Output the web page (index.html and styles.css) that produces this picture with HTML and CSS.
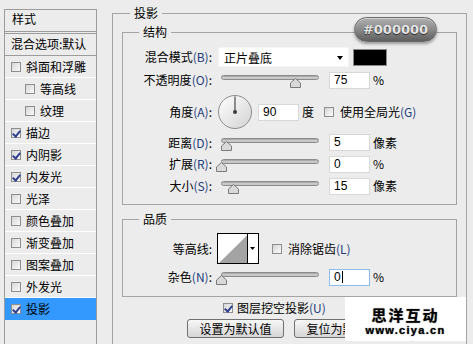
FILE: index.html
```html
<!DOCTYPE html>
<html lang="zh-CN">
<head>
    <meta charset="UTF-8">
    <meta name="viewport" content="width=device-width, initial-scale=1.0">
    <title>图层样式 - 投影</title>
    <link rel="stylesheet" href="styles.css">
</head>
<body>
    <div class="page">
        <ul class="style-list">
            <li class="list-head">样式</li>
            <li class="list-blend">混合选项:默认</li>
            <li><span class="check"></span>斜面和浮雕</li>
            <li class="sub"><span class="check"></span>等高线</li>
            <li class="sub"><span class="check"></span>纹理</li>
            <li><span class="check on"></span>描边</li>
            <li><span class="check on"></span>内阴影</li>
            <li><span class="check on"></span>内发光</li>
            <li><span class="check"></span>光泽</li>
            <li><span class="check"></span>颜色叠加</li>
            <li><span class="check"></span>渐变叠加</li>
            <li><span class="check"></span>图案叠加</li>
            <li><span class="check"></span>外发光</li>
            <li class="selected"><span class="check on"></span>投影</li>
        </ul>

        <fieldset class="group outer">
            <legend>投影</legend>

            <fieldset class="group inner structure">
                <legend>结构</legend>

                <div class="row h22">
                    <label class="lbl">混合模式<span class="key">(B)</span>:</label>
                    <div class="select">正片叠底<span class="arrow"></span></div>
                    <span class="swatch"></span>
                </div>

                <div class="row h24">
                    <label class="lbl">不透明度<span class="key">(O)</span>:</label>
                    <div class="slider"><span class="track"></span><svg class="thumb" style="left: 69px" width="11" height="10" viewBox="0 0 11 10"><polygon points="0.5,9.5 0.5,5 5.5,0.5 10.5,5 10.5,9.5" fill="#d9d9d9" stroke="#7a7a7a"/></svg></div>
                    <span class="num">75</span>
                    <span class="unit">%</span>
                </div>

                <div class="row h40">
                    <label class="lbl">角度<span class="key">(A)</span>:</label>
                    <svg class="dial" width="34" height="34" viewBox="0 0 34 34">
                        <defs>
                            <linearGradient id="dialFill" x1="0" y1="0" x2="1" y2="1">
                                <stop offset="0" stop-color="#ffffff"/>
                                <stop offset="1" stop-color="#d2d2d2"/>
                            </linearGradient>
                        </defs>
                        <circle cx="17" cy="17" r="16.5" fill="url(#dialFill)" stroke="#8c8c8c"/>
                        <line x1="17" y1="17" x2="17" y2="1.5" stroke="#4a4a4a" stroke-width="1.2"/>
                        <circle cx="17" cy="17" r="2" fill="#3c3c3c"/>
                    </svg>
                    <span class="num angle">90</span>
                    <span class="unit">度</span>
                    <span class="check gap-left"></span>
                    <span class="check-text">使用全局光<span class="key">(G)</span></span>
                </div>

                <div class="row h21">
                    <label class="lbl">距离<span class="key">(D)</span>:</label>
                    <div class="slider"><span class="track"></span><svg class="thumb" style="left: 0px" width="11" height="10" viewBox="0 0 11 10"><polygon points="0.5,9.5 0.5,5 5.5,0.5 10.5,5 10.5,9.5" fill="#d9d9d9" stroke="#7a7a7a"/></svg></div>
                    <span class="num">5</span>
                    <span class="unit">像素</span>
                </div>

                <div class="row h22">
                    <label class="lbl">扩展<span class="key">(R)</span>:</label>
                    <div class="slider"><span class="track"></span><svg class="thumb" style="left: -5px" width="11" height="10" viewBox="0 0 11 10"><polygon points="0.5,9.5 0.5,5 5.5,0.5 10.5,5 10.5,9.5" fill="#d9d9d9" stroke="#7a7a7a"/></svg></div>
                    <span class="num">0</span>
                    <span class="unit">%</span>
                </div>

                <div class="row h22">
                    <label class="lbl">大小<span class="key">(S)</span>:</label>
                    <div class="slider"><span class="track"></span><svg class="thumb" style="left: 7px" width="11" height="10" viewBox="0 0 11 10"><polygon points="0.5,9.5 0.5,5 5.5,0.5 10.5,5 10.5,9.5" fill="#d9d9d9" stroke="#7a7a7a"/></svg></div>
                    <span class="num">15</span>
                    <span class="unit">像素</span>
                </div>
            </fieldset>

            <fieldset class="group inner quality">
                <legend>品质</legend>

                <div class="row h33">
                    <label class="lbl">等高线:</label>
                    <svg class="contour" width="42" height="31" viewBox="0 0 42 31">
                        <rect x="0.5" y="0.5" width="41" height="30" fill="#fff" stroke="#000"/>
                        <polygon points="2,30 30.5,2 30.5,30" fill="#a3a3a3"/>
                        <line x1="30.5" y1="0" x2="30.5" y2="31" stroke="#000"/>
                        <polygon points="33,14 38,14 35.5,17" fill="#000"/>
                    </svg>
                    <span class="check gap-wide"></span>
                    <span class="check-text">消除锯齿<span class="key">(L)</span></span>
                </div>

                <div class="row h24">
                    <label class="lbl">杂色<span class="key">(N)</span>:</label>
                    <div class="slider"><span class="track"></span><svg class="thumb" style="left: -5px" width="11" height="10" viewBox="0 0 11 10"><polygon points="0.5,9.5 0.5,5 5.5,0.5 10.5,5 10.5,9.5" fill="#d9d9d9" stroke="#7a7a7a"/></svg></div>
                    <span class="num focus">0<span class="caret"></span></span>
                    <span class="unit">%</span>
                </div>
            </fieldset>

            <div class="knockout">
                <span class="check on"></span>
                <span class="check-text">图层挖空投影<span class="key">(U)</span></span>
            </div>

            <div class="buttons">
                <button type="button">设置为默认值</button>
                <button type="button">复位为默认值</button>
            </div>
        </fieldset>
    </div>

    <div class="badge">#000000</div>

    <div class="watermark">
        <div class="wm-title">思洋互动</div>
        <div class="wm-url">www.ciya.cn</div>
    </div>
</body>
</html>
```

FILE: styles.css
```css
* {
    box-sizing: border-box;
}

html, body {
    margin: 0;
    padding: 0;
}

body {
    position: relative;
    width: 473px;
    height: 344px;
    overflow: hidden;
    background-color: #ececec;
    font-family: "Noto Sans CJK SC", "Noto Sans", sans-serif;
    font-size: 12px;
    line-height: 14px;
    color: #000;
}

.page {
    display: flex;
    align-items: flex-start;
    padding-left: 4px;
}

/* left style list */
.style-list {
    list-style: none;
    margin: 9px 0 0 0;
    padding: 0;
    width: 93px;
    height: 380px;
    border: 1px solid #9c9c9c;
}

.style-list li {
    display: flex;
    align-items: center;
    height: 22px;
    padding-left: 6px;
    border-bottom: 1px solid #fff;
    white-space: nowrap;
}

.style-list li.sub {
    padding-left: 20px;
}

.style-list .list-head {
    height: 24px;
    padding: 0 0 3px 7px;
    border-bottom: 3px double #9c9c9c;
}

.style-list .list-blend {
    padding-bottom: 2px;
    border-bottom-color: #9c9c9c;
}

.style-list li.selected {
    background-color: #3399ff;
    border-bottom-color: #3399ff;
}

.style-list .check {
    margin-right: 5px;
}

/* checkboxes */
.check {
    position: relative;
    display: inline-block;
    flex: none;
    width: 10px;
    height: 10px;
    border: 1px solid #8e8e8e;
    background: linear-gradient(135deg, #d6d6d6, #fafafa);
}

.check.on::after {
    content: "";
    position: absolute;
    left: 2px;
    top: 0;
    width: 3px;
    height: 6px;
    border-right: 2px solid #2f3f8f;
    border-bottom: 2px solid #2f3f8f;
    transform: rotate(40deg);
}

.check-text {
    margin-left: 6px;
    white-space: nowrap;
}

/* group boxes */
.group {
    margin: 0;
    padding: 0 9px;
    min-width: 0;
    border: 1px solid #a4a4a4;
}

.group legend {
    height: 14px;
    padding: 0 4px;
    line-height: 14px;
}

.outer {
    margin: 6px 0 0 15px;
    width: 355px;
    height: 400px;
}

.outer > legend {
    margin-left: 8px;
}

.inner > legend {
    margin-left: 7px;
}

.structure {
    margin-top: 5px;
    padding-top: 7px;
    padding-bottom: 7px;
}

.quality {
    margin-top: 7px;
    padding-top: 6px;
    padding-bottom: 7px;
}

.row {
    display: flex;
    align-items: center;
}

.h21 { height: 21px; }
.h22 { height: 22px; }
.h24 { height: 24px; }
.h33 { height: 33px; }
.h40 { height: 40px; }

.lbl {
    flex: none;
    width: 80px;
    text-align: right;
    white-space: nowrap;
}

.key {
    color: #1d3c7c;
}

.select {
    position: relative;
    width: 131px;
    height: 20px;
    margin-left: 6px;
    padding-left: 5px;
    line-height: 20px;
    background-color: #fff;
    border: 1px solid #f4f4f4;
}

.select .arrow {
    position: absolute;
    right: 5px;
    top: 8px;
    border-left: 3.5px solid transparent;
    border-right: 3.5px solid transparent;
    border-top: 4px solid #000;
}

.swatch {
    width: 34px;
    height: 17px;
    margin-left: 4px;
    background-color: #000;
    border: 1px solid #8a8a8a;
}

/* sliders */
.slider {
    position: relative;
    flex: none;
    width: 98px;
    height: 16px;
    margin-left: 9px;
}

.slider .track {
    position: absolute;
    left: 0;
    right: 0;
    top: 3px;
    height: 5px;
    border: 1px solid #8c8c8c;
    border-radius: 3px;
    background: linear-gradient(#9c9c9c, #d4d4d4 60%, #bdbdbd);
}

.slider .thumb {
    position: absolute;
    top: 6px;
}

.num {
    flex: none;
    width: 41px;
    height: 17px;
    margin-left: 10px;
    padding-left: 4px;
    font-family: "Liberation Sans", Arial, sans-serif;
    font-size: 12px;
    line-height: 15px;
    background-color: #fff;
    border: 1px solid #d8d8d8;
}

.num.angle {
    margin-left: 6px;
}

.num.focus {
    border-color: #8cbcec;
}

.caret {
    display: inline-block;
    width: 1px;
    height: 12px;
    margin-left: 1px;
    vertical-align: -2px;
    background-color: #000;
}

.unit {
    margin-left: 3px;
    white-space: nowrap;
}

.dial {
    flex: none;
    margin-left: 6px;
}

.gap-left {
    margin-left: 10px;
}

.contour {
    flex: none;
    margin-left: 5px;
}

.gap-wide {
    margin-left: 13px;
}

.knockout {
    display: flex;
    align-items: center;
    height: 16px;
    margin-top: 3px;
    padding-left: 101px;
}

.knockout .check-text {
    margin-left: 4px;
}

.buttons {
    display: flex;
    gap: 10px;
    margin-top: 3px;
    padding-left: 65px;
}

.buttons button {
    width: 97px;
    height: 19px;
    padding: 0;
    font-family: "Noto Sans CJK SC", sans-serif;
    font-size: 12px;
    line-height: 15px;
    color: #000;
    background: linear-gradient(#f7f7f7, #e6e6e6 50%, #d6d6d6);
    border: 1px solid #707070;
    border-radius: 3px;
}

/* colour badge laid over the dialog */
.badge {
    position: absolute;
    left: 354px;
    top: 17px;
    width: 83px;
    height: 25px;
    border: 1px solid #6c6c6c;
    border-radius: 13px;
    background: linear-gradient(#b0b0b0, #8a8a8a 50%, #5e5e5e);
    box-shadow: inset 0 1px 0 rgba(255, 255, 255, 0.45), 0 2px 3px rgba(0, 0, 0, 0.35);
    font-family: "DejaVu Sans", sans-serif;
    font-weight: bold;
    font-size: 13px;
    line-height: 23px;
    text-align: center;
    color: #e4e4e4;
    text-shadow: 0 1px 1px #2a2a2a;
}

/* watermark */
.watermark {
    position: absolute;
    left: 345px;
    top: 297px;
    width: 121px;
    height: 44px;
    padding-top: 10px;
    background-color: #fff;
    text-align: center;
}

.wm-title {
    font-size: 15px;
    font-weight: bold;
    line-height: 15px;
    letter-spacing: 2px;
    color: #000;
    text-shadow: 0 0 1px #888, 0 0 1px #888;
}

.wm-url {
    margin-top: 3px;
    font-family: "Liberation Sans", Arial, sans-serif;
    font-size: 11px;
    font-weight: bold;
    line-height: 10px;
    letter-spacing: 1.3px;
    color: #000;
    text-shadow: 0 0 1px #777, 0 0 1px #777;
}
```
